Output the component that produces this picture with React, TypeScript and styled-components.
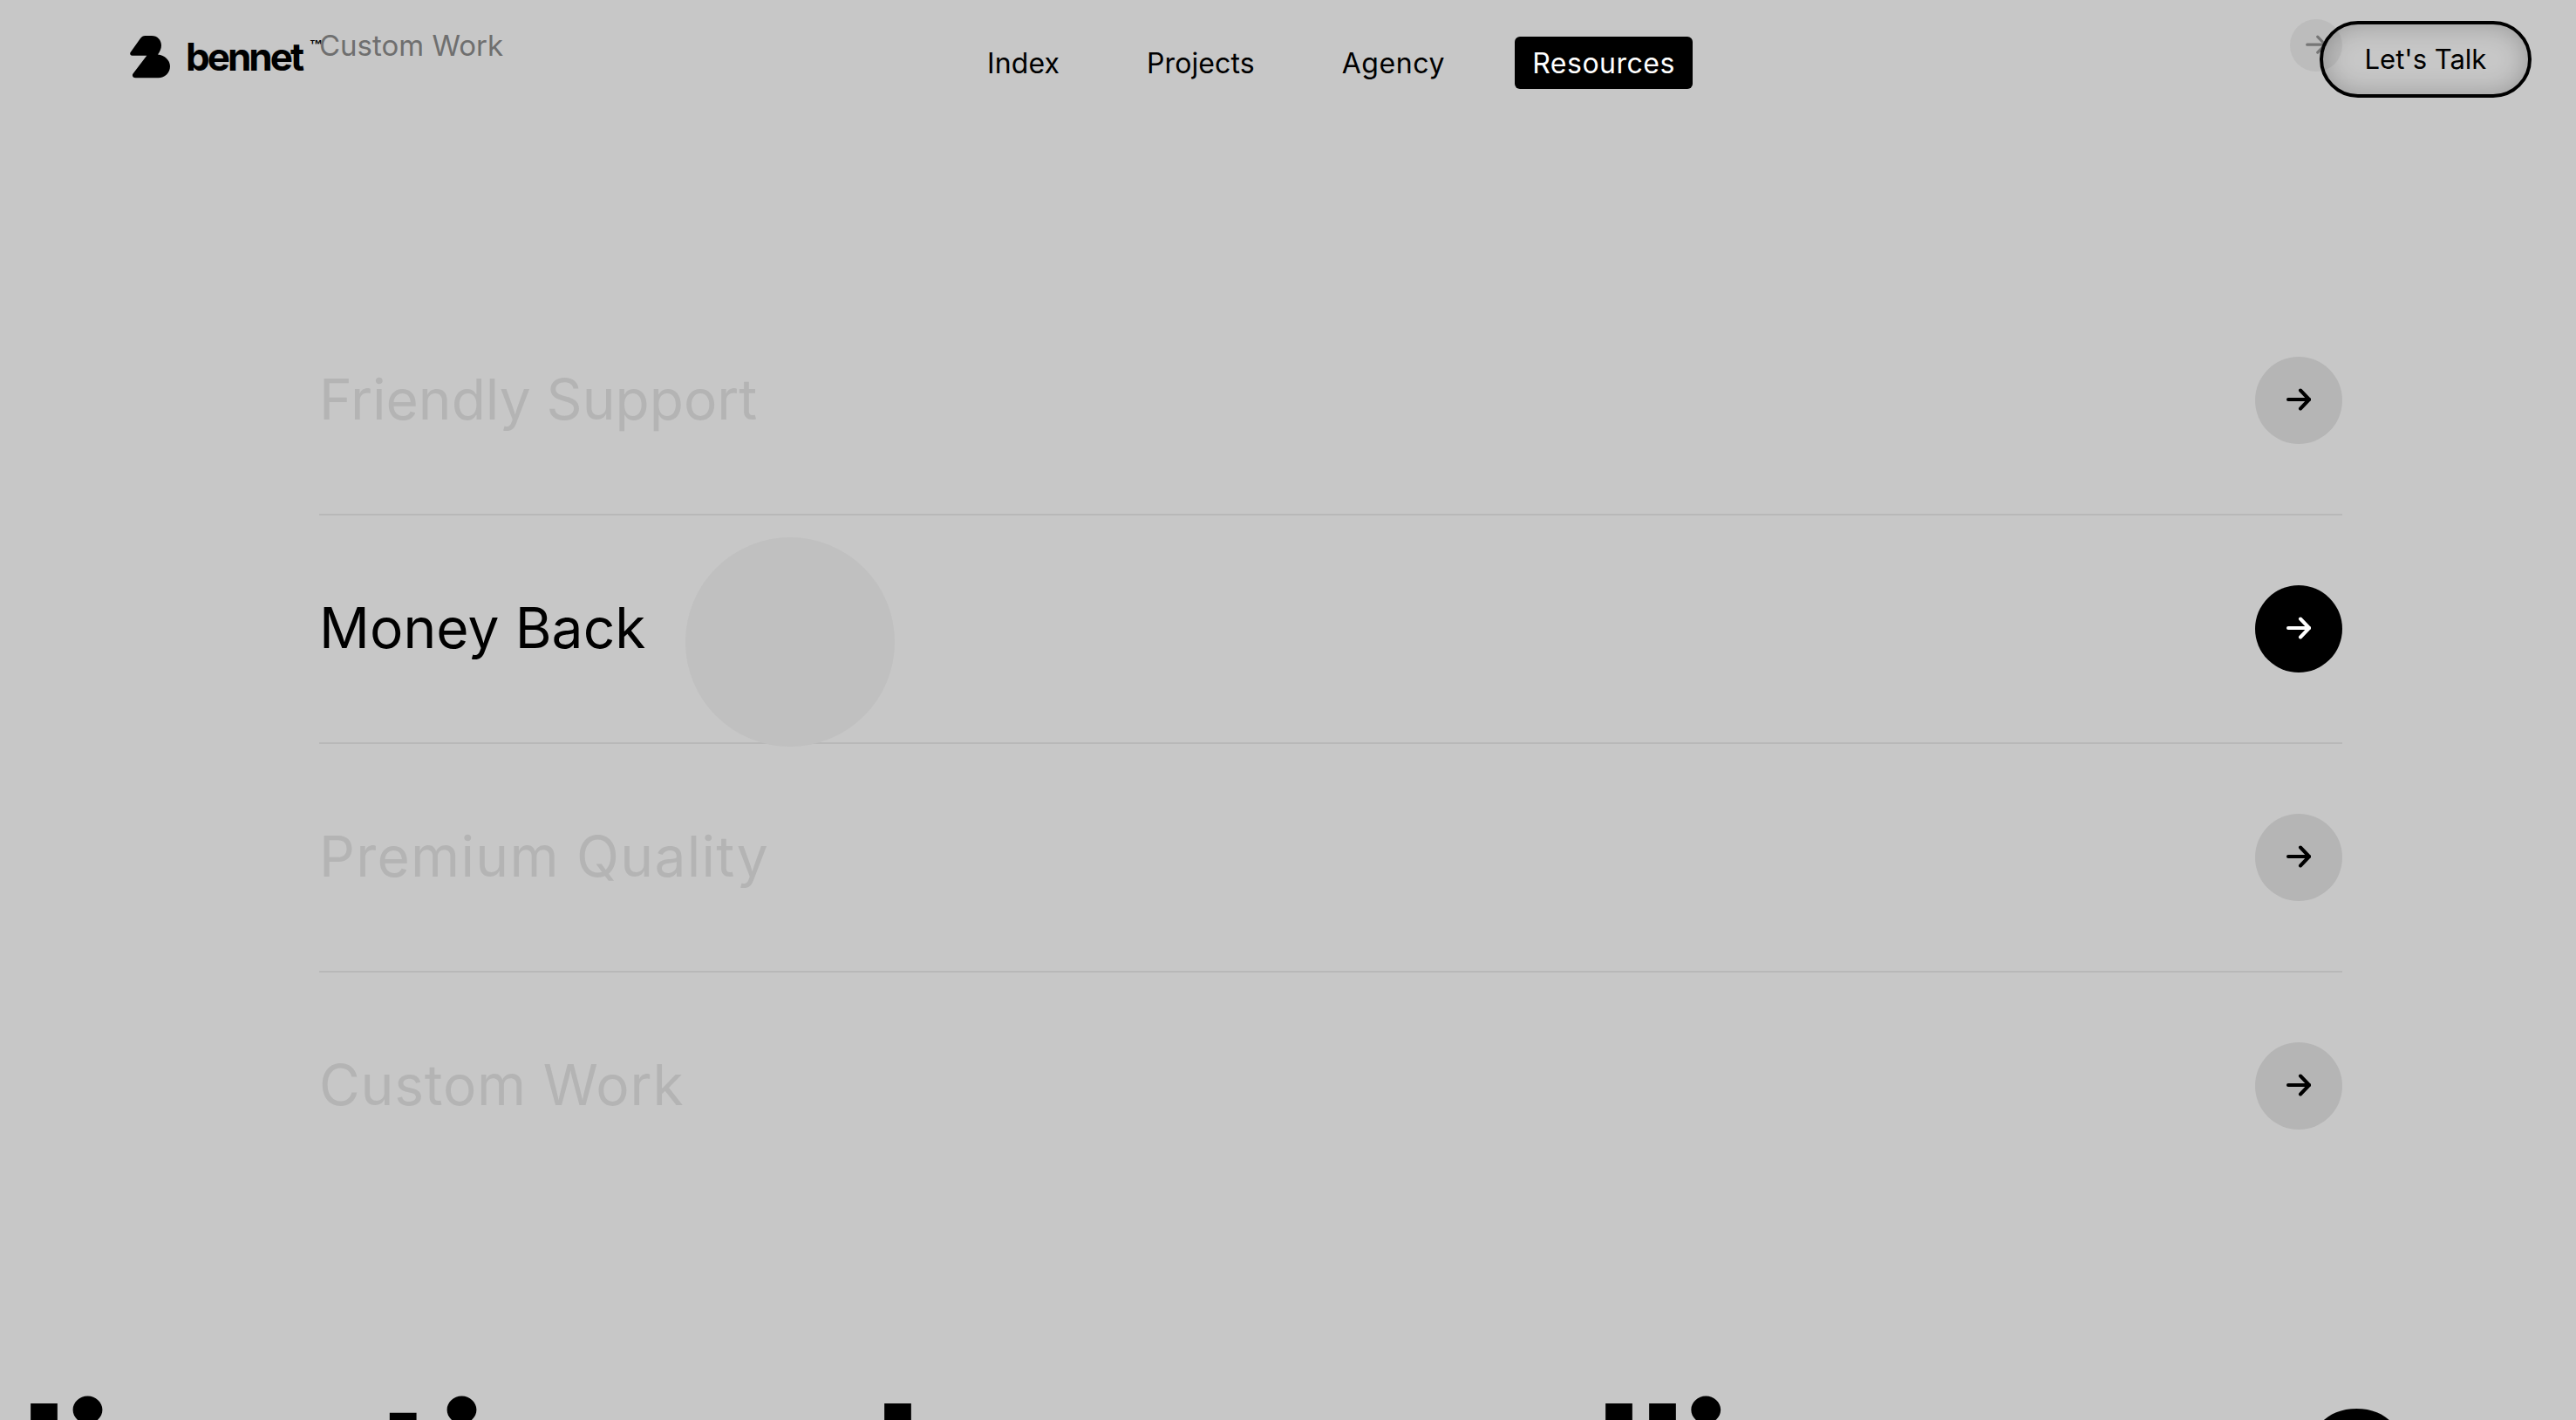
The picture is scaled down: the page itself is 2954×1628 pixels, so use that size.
import React from "react";
import styled, { createGlobalStyle } from "styled-components";

const GlobalStyle = createGlobalStyle`
  html, body {
    margin: 0;
    padding: 0;
    background: #c7c7c7;
  }
  body {
    font-family: "Inter", "Liberation Sans", sans-serif;
    color: #000;
    overflow: hidden;
  }
`;

const Page = styled.div`
  position: relative;
  width: 2954px;
  height: 1628px;
  overflow: hidden;
  background: #c7c7c7;
  display: flex;
  flex-direction: column;
`;

const Header = styled.header`
  position: relative;
  height: 329px;
  flex: none;
  display: flex;
  align-items: flex-start;
  padding-left: 149px;
  box-sizing: border-box;
`;

const Logo = styled.a`
  display: flex;
  align-items: center;
  gap: 18px;
  margin-top: 41px;
  width: 963px;
  flex: none;
  height: 48px;
`;

const LogoText = styled.span`
  position: relative;
  font-size: 44px;
  font-weight: 700;
  letter-spacing: -3px;
  line-height: 48px;
`;

const Trademark = styled.span`
  position: absolute;
  left: 142px;
  top: 2px;
  font-family: "Liberation Sans", sans-serif;
  font-size: 15px;
  font-weight: 700;
  letter-spacing: 0;
  line-height: 16px;
`;

const PanelLabel = styled.span`
  position: absolute;
  left: 366px;
  top: 32px;
  font-size: 33px;
  line-height: 40px;
  color: #6f6f6f;
`;

const Nav = styled.nav`
  display: flex;
  gap: 60px;
  margin-top: 42px;
`;

const NavItem = styled.a<{ $active?: boolean; $tracking?: number }>`
  display: flex;
  align-items: center;
  height: 60px;
  padding: 0 20px;
  border-radius: 6px;
  font-size: 32px;
  letter-spacing: ${(p) => p.$tracking ?? 0.1}px;
  background: ${(p) => (p.$active ? "#000" : "transparent")};
  color: ${(p) => (p.$active ? "#fff" : "#000")};
`;

const ContactButton = styled.a`
  position: absolute;
  left: 2660px;
  top: 24px;
  width: 243px;
  height: 88px;
  box-sizing: border-box;
  border: 4px solid #000;
  border-radius: 44px;
  padding-bottom: 2px;
  display: flex;
  align-items: center;
  justify-content: center;
  font-size: 31px;
  box-shadow: inset 0 0 30px rgba(0, 0, 0, 0.24);
`;

const GhostArrow = styled.span`
  position: absolute;
  left: 2626px;
  top: 22px;
  width: 60px;
  height: 60px;
  border-radius: 50%;
  background: #bcbcbc;
  color: #767676;
  display: flex;
  align-items: center;
  justify-content: center;
`;

const List = styled.ul`
  list-style: none;
  margin: 0;
  padding: 0 268px 0 366px;
  flex: none;
`;

const Row = styled.li`
  position: relative;
  display: flex;
  align-items: center;
  justify-content: space-between;
  padding: 80px 0;
  border-bottom: 2px solid #b8b8b8;

  &:last-child {
    border-bottom: none;
  }
`;

const RowTitle = styled.span<{ $active?: boolean; $tracking: number }>`
  font-size: 64px;
  font-weight: 440;
  line-height: 96px;
  margin-bottom: 2px;
  letter-spacing: ${(p) => p.$tracking}px;
  color: ${(p) => (p.$active ? "#000" : "#b4b4b4")};
`;

const RowArrow = styled.span<{ $active?: boolean }>`
  width: 100px;
  height: 100px;
  border-radius: 50%;
  display: flex;
  align-items: center;
  justify-content: center;
  background: ${(p) => (p.$active ? "#000" : "#b5b5b5")};
  color: ${(p) => (p.$active ? "#fff" : "#000")};
`;

const Cursor = styled.span`
  position: absolute;
  left: 420px;
  top: 25px;
  width: 240px;
  height: 240px;
  border-radius: 50%;
  background: #c0c0c0;
`;

const Ticker = styled.div`
  margin-top: auto;
  height: 29px;
  flex: none;
  overflow: hidden;
  display: flex;
  align-items: flex-start;
  padding-left: 22px;
  font-size: 210px;
  font-weight: 700;
  line-height: 240px;
  white-space: nowrap;
`;

const TickerWord = styled.span<{ $width: number; $drop: number; $tracking: number }>`
  flex: none;
  width: ${(p) => p.$width}px;
  margin-top: ${(p) => p.$drop}px;
  letter-spacing: ${(p) => p.$tracking}px;
`;

const Arrow = ({ width = 28, stroke = 4 }: { width?: number; stroke?: number }) => (
  <svg width={width} height={width} viewBox="0 0 28 28" fill="none" stroke="currentColor" strokeWidth={stroke} strokeLinecap="round" strokeLinejoin="round">
    <path d="M2 13h24" />
    <path d="M16 2.5 26 13 16 23.5" />
  </svg>
);

const LogoMark = () => (
  <svg width="46" height="49" viewBox="0 0 46 49" fill="#000">
    <path d="M2.5 22.7C.3 22.7-.5 20.5.8 18.8L12 3C13.5 1 15 0 17.5 0H25C31.5 0 36 4.8 36 11 36 14.5 34.5 18 32 21.5 40 22.5 46 28 46 35 46 42.5 40 48.3 32.7 48.3H6.5C3.5 48.3 2 45.5 3.5 43.5L19.3 22.7Z" />
  </svg>
);

const rows = [
  { title: "Friendly Support", tracking: 0 },
  { title: "Money Back", tracking: 0.1 },
  { title: "Premium Quality", tracking: 1.3 },
  { title: "Custom Work", tracking: 0.8 },
];

// only the tops of the huge marquee letters show above the fold
const tickerWords = [
  { text: "li", width: 407, drop: -33, tracking: -7 },
  { text: "ti", width: 572, drop: -33, tracking: -5 },
  { text: "l", width: 827, drop: -33, tracking: 0 },
  { text: "lli", width: 810, drop: -33, tracking: -7 },
  { text: "o", width: 200, drop: -64, tracking: 0 },
];

const App: React.FC = () => (
  <Page>
    <GlobalStyle />
    <Header>
      <Logo>
        <LogoMark />
        <LogoText>
          bennet
          <Trademark>™</Trademark>
        </LogoText>
      </Logo>
      <PanelLabel>Custom Work</PanelLabel>
      <Nav>
        <NavItem>Index</NavItem>
        <NavItem>Projects</NavItem>
        <NavItem $tracking={0.6}>Agency</NavItem>
        <NavItem $active $tracking={0.5}>Resources</NavItem>
      </Nav>
      <GhostArrow>
        <Arrow width={24} stroke={3.6} />
      </GhostArrow>
      <ContactButton>Let's Talk</ContactButton>
    </Header>
    <List>
      {rows.map((row, index) => (
        <Row key={row.title}>
          <RowTitle $active={index === 1} $tracking={row.tracking}>
            {row.title}
          </RowTitle>
          {index === 1 && <Cursor />}
          <RowArrow $active={index === 1}>
            <Arrow />
          </RowArrow>
        </Row>
      ))}
    </List>
    <Ticker>
      {tickerWords.map((word) => (
        <TickerWord key={word.text} $width={word.width} $drop={word.drop} $tracking={word.tracking}>
          {word.text}
        </TickerWord>
      ))}
    </Ticker>
  </Page>
);

export default App;
